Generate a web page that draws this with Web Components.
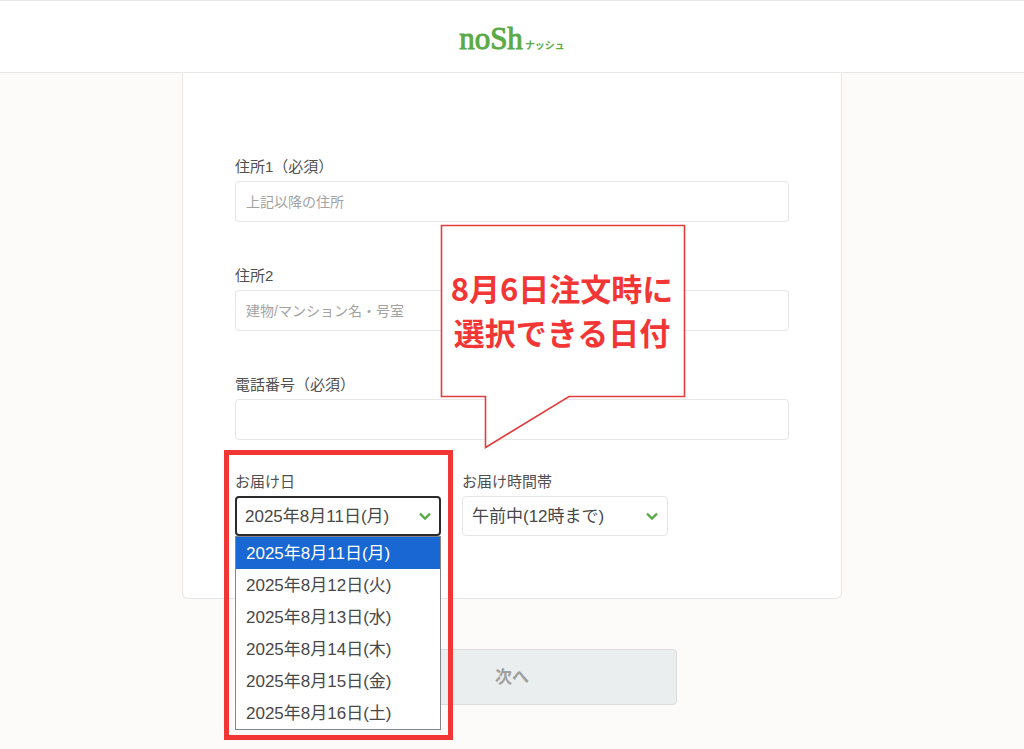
<!DOCTYPE html>
<html lang="ja">
<head>
<meta charset="utf-8">
<meta name="viewport" content="width=device-width, initial-scale=1">
<title>nosh お届け先の入力</title>
<style>
  html, body { margin: 0; }
  body {
    min-height: 100vh;
    background: #fdfbfa;
    color: #505050;
    font-family: "Liberation Sans", "Noto Sans CJK JP", sans-serif;
    --line: #e6e6e6;
    --green: #5aaa46;
    --red: #f23636;
  }
</style>
</head>
<body>
<order-page>
  <site-header slot="header"></site-header>
  <form-card>
    <text-field label="住所1（必須）" placeholder="上記以降の住所"></text-field>
    <text-field label="住所2" placeholder="建物/マンション名・号室"></text-field>
    <text-field label="電話番号（必須）"></text-field>
    <delivery-row slot="delivery">
      <select-field label="お届け日" open marked options="2025年8月11日(月),2025年8月12日(火),2025年8月13日(水),2025年8月14日(木),2025年8月15日(金),2025年8月16日(土)"></select-field>
      <select-field label="お届け時間帯" options="午前中(12時まで)"></select-field>
    </delivery-row>
    <speech-callout slot="note">8月6日注文時に<br>選択できる日付</speech-callout>
  </form-card>
  <next-button slot="action">次へ</next-button>
</order-page>

<script>
  class Base extends HTMLElement {
    connectedCallback() {
      if (this.shadowRoot) return;
      this.attachShadow({ mode: 'open' }).innerHTML =
        '<style>*{box-sizing:border-box}:host{box-sizing:border-box}</style>' + this.view();
    }
  }

  customElements.define('order-page', class extends Base {
    view() {
      return `<style>
        :host { display: flex; flex-direction: column; }
        main { display: flex; flex-direction: column; align-items: center; gap: 50px; padding: 0 16px 44px; }
      </style>
      <slot name="header"></slot>
      <main><slot></slot><slot name="action"></slot></main>`;
    }
  });

  customElements.define('site-header', class extends Base {
    view() {
      return `<style>
        :host { display: block; background: #fff; border: solid #e8e8e8; border-width: 1px 0; }
        header { display: flex; justify-content: center; padding: 18px 0 13px; }
        a { display: flex; align-items: baseline; gap: 2px; height: 40px; color: var(--green); text-decoration: none; }
        b { font: normal 31px/40px "Liberation Serif", serif; -webkit-text-stroke: 1px var(--green); }
        span { font: bold 10px/16px "Noto Sans CJK JP", sans-serif; }
      </style>
      <header><a href="#"><b>noSh</b><span>ナッシュ</span></a></header>`;
    }
  });

  customElements.define('form-card', class extends Base {
    view() {
      return `<style>
        :host {
          display: block; position: relative; width: 100%; max-width: 660px;
          padding: 83px 52px 62px; background: #fff;
          border: 1px solid var(--line); border-top: 0; border-radius: 0 0 6px 6px;
        }
        .fields { display: flex; flex-direction: column; gap: 43px; margin-bottom: 31px; }
      </style>
      <div class="fields"><slot></slot></div>
      <slot name="delivery"></slot>
      <slot name="note"></slot>`;
    }
  });

  customElements.define('text-field', class extends Base {
    view() {
      return `<style>
        :host { display: flex; flex-direction: column; gap: 3px; }
        label { font-size: 15px; line-height: 22px; }
        input {
          width: 100%; height: 41px; padding: 0 10px; font: inherit; font-size: 14px; color: #505050;
          background: #fff; border: 1px solid var(--line); border-radius: 4px; outline: 0;
        }
        input::placeholder { color: #a3a3a3; opacity: 1; }
      </style>
      <label for="f">${this.getAttribute('label')}</label>
      <input id="f" type="text" placeholder="${this.getAttribute('placeholder') || ''}">`;
    }
  });

  customElements.define('delivery-row', class extends Base {
    view() {
      return `<style>
        :host { display: grid; grid-template-columns: 206px 206px; gap: 21px; }
      </style><slot></slot>`;
    }
  });

  customElements.define('select-field', class extends Base {
    view() {
      const options = this.getAttribute('options').split(',');
      const list = this.hasAttribute('open')
        ? `<ul role="listbox">${options.map((o, i) => `<li role="option" aria-selected="${i === 0}">${o}</li>`).join('')}</ul>` : '';
      return `<style>
        :host { display: flex; flex-direction: column; gap: 3px; position: relative; }
        label { font-size: 15px; line-height: 22px; }
        .box { display: grid; position: relative; }
        select {
          appearance: none; width: 100%; height: 40px; padding: 0 32px 0 9px; font: inherit; font-size: 17px;
          color: #484848; background: #fff; border: 1px solid var(--line); border-radius: 4px; outline: 0;
        }
        :host([open]) select { border: 2px solid #2b2b2b; padding-left: 8px; }
        svg { position: absolute; right: 9px; top: 14px; pointer-events: none; }
        ul {
          position: absolute; z-index: 2; top: 100%; left: 0; right: 0; margin: 0; padding: 0;
          list-style: none; background: #fff; border: 1px solid #85858c;
        }
        li { padding: 2px 10px 0; font-size: 17px; line-height: 30px; color: #484848; white-space: nowrap; }
        li[aria-selected="true"] { background: #1967d2; color: #fff; }
        .mark {
          position: absolute; z-index: 3; top: -21px; left: -11px; right: -12px; height: 290px;
          border: 5px solid var(--red); pointer-events: none;
        }
      </style>
      <label for="s">${this.getAttribute('label')}</label>
      <div class="box">
        <select id="s">${options.map(o => `<option>${o}</option>`).join('')}</select>
        <svg width="14" height="12" viewBox="0 0 14 12" fill="none" stroke="var(--green)" stroke-width="2.4" aria-hidden="true"><path d="M2 3.7 7 8.5 12 3.7"/></svg>
        ${list}
      </div>
      ${this.hasAttribute('marked') ? '<div class="mark"></div>' : ''}`;
    }
  });

  customElements.define('speech-callout', class extends Base {
    view() {
      return `<style>
        :host { display: block; position: absolute; top: 151px; left: 50%; margin-left: -72px; width: 244px; height: 226px; }
        svg { position: absolute; top: 0; left: 0; }
        p {
          position: relative; display: grid; place-content: center; height: 172px; margin: 0; text-align: center;
          font: bold 31px/44px "Noto Sans CJK JP", sans-serif; color: var(--red); white-space: nowrap;
        }
      </style>
      <svg width="246" height="226" viewBox="0 0 246 226" aria-hidden="true">
        <path d="M1.5 1.5H244.5V172.5H129L45.5 223.5V172.5H1.5Z" fill="#fff" stroke="#e23e40" stroke-width="1.6"/>
      </svg>
      <p><span><slot></slot></span></p>`;
    }
  });

  customElements.define('next-button', class extends Base {
    view() {
      return `<style>
        :host { display: block; width: 100%; max-width: 330px; }
        button {
          width: 100%; height: 56px; padding: 0 0 4px; font: inherit; font-size: 17px; font-weight: bold;
          color: #a0a0a0; background: #ebeeee; border: 1px solid #dcdcdc; border-radius: 4px;
        }
      </style><button type="button"><slot></slot></button>`;
    }
  });
</script>
</body>
</html>
